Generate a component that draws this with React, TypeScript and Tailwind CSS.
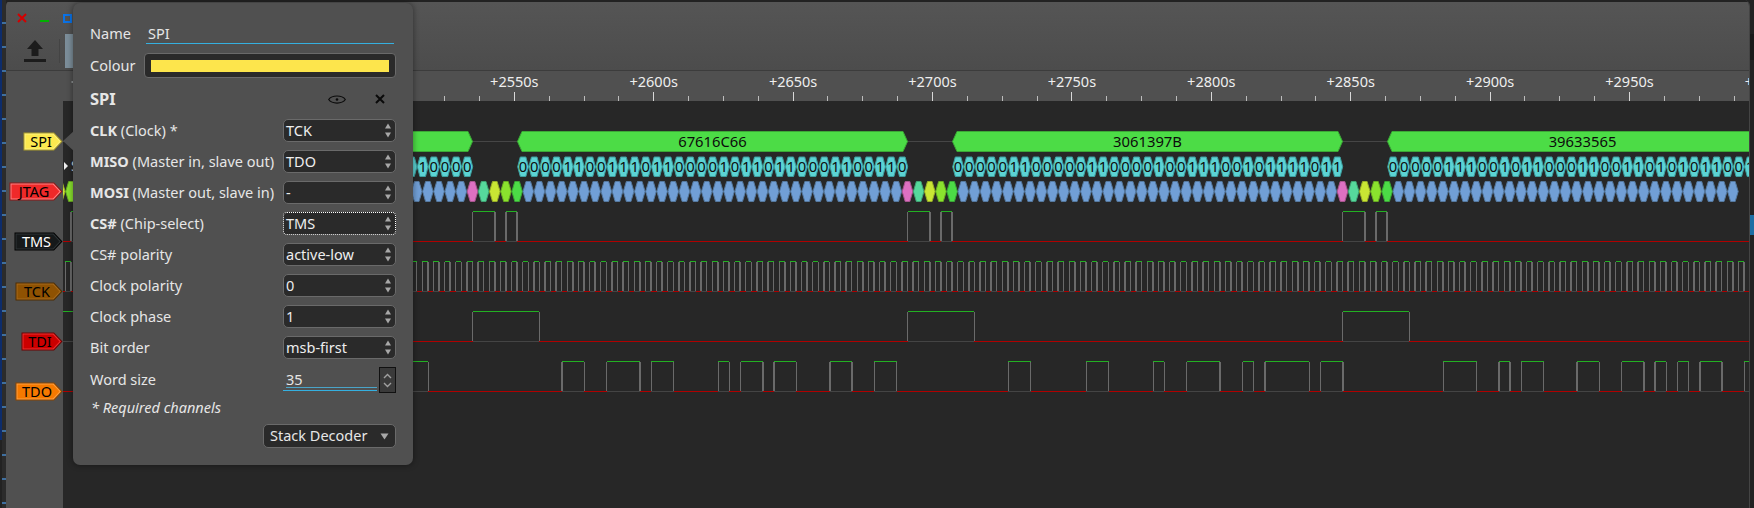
const BIT = 435 / 39;

const words = [
  { start: 82.5, hex: "", bits: "00000000000000000000000000000110000" },
  { start: 517.5, hex: "67616C66", bits: "" },
  { start: 952.5, hex: "3061397B", bits: "" },
  { start: 1387.5, hex: "39633565", bits: "" },
].map((w) => ({
  ...w,
  bits: w.bits || parseInt(w.hex, 16).toString(2).padStart(35, "0"),
}));

// labels left of +2550s sit under the popup
const rulerMarks = [2550, 2600, 2650, 2700, 2750, 2800, 2850, 2900, 2950, 3000];
const RULER_ZERO = 514.3;
const RULER_STEP = 139.4;

const traceRows = [
  { name: "SPI", width: 40, fill: "#fce94f", edge: "#a89a2a", inner: "#fff27f", text: "#000000" },
  { name: "JTAG", width: 54, fill: "#ef2929", edge: "#8f1515", inner: "#ff8585", text: "#000000" },
  { name: "TMS", width: 49, fill: "#16191a", edge: "#000000", inner: "#2e3436", text: "#ffffff" },
  { name: "TCK", width: 48, fill: "#8f5202", edge: "#4f2d01", inner: "#a76a1c", text: "#000000" },
  { name: "TDI", width: 42, fill: "#cc0000", edge: "#6e0000", inner: "#ee3030", text: "#000000" },
  { name: "TDO", width: 48, fill: "#f57900", edge: "#8a4400", inner: "#ffa040", text: "#000000" },
];

const channelFields = [
  { bold: "CLK", rest: " (Clock) *", value: "TCK" },
  { bold: "MISO", rest: " (Master in, slave out)", value: "TDO" },
  { bold: "MOSI", rest: " (Master out, slave in)", value: "-" },
  { bold: "CS#", rest: " (Chip-select)", value: "TMS", focus: true },
  { bold: "", rest: "CS# polarity", value: "active-low" },
  { bold: "", rest: "Clock polarity", value: "0" },
  { bold: "", rest: "Clock phase", value: "1" },
  { bold: "", rest: "Bit order", value: "msb-first" },
];

type Span = [number, number];

const wordStarts = [37.5, 472.5, 907.5, 1342.5];

const tmsHigh: Span[] = wordStarts.flatMap((s): Span[] => [
  [s, s + 2 * BIT],
  [s + 3 * BIT, s + 4 * BIT],
]);
const tdiHigh: Span[] = wordStarts.map((s): Span => [s, s + 6 * BIT]);
const tckHigh: Span[] = Array.from({ length: 160 }, (_, n): Span => {
  const rise = 37.5 - BIT / 2 + n * BIT;
  return [rise, rise + BIT / 2];
});
const tdoHigh: Span[] = words.flatMap((w) => {
  const out: Span[] = [];
  w.bits.split("").forEach((b, i) => {
    if (b !== "1") return;
    const x = w.start + i * BIT;
    const last = out[out.length - 1];
    if (last && Math.abs(last[1] - x) < 1) last[1] = x + BIT;
    else out.push([x, x + BIT]);
  });
  return out;
});

const LEFT = 63;
const RIGHT = 1749;

function Signal({ low, high }: { low: number; high: Span[] }) {
  const top = low - 30;
  const spans = high.filter(([a, b]) => b > LEFT && a < RIGHT);
  const reds: Span[] = [];
  let cursor = LEFT;
  spans.forEach(([a, b]) => {
    if (a > cursor) reds.push([cursor, a]);
    cursor = b;
  });
  if (cursor < RIGHT) reds.push([cursor, RIGHT]);
  return (
    <g shapeRendering="crispEdges">
      <line x1={LEFT} x2={RIGHT} y1={low + 0.5} y2={low + 0.5} stroke="#444444" />
      {reds.map(([a, b], i) => (
        <line key={i} x1={a} x2={b} y1={low + 0.5} y2={low + 0.5} stroke="#b00000" />
      ))}
      {spans.map(([a, b], i) => (
        <g key={i}>
          <line x1={Math.max(a, LEFT)} x2={Math.min(b, RIGHT)} y1={top + 0.5} y2={top + 0.5} stroke="#22b022" />
          {a > LEFT && <line x1={a} x2={a} y1={top + 1} y2={low} stroke="#6a6a6a" strokeWidth={1.4} />}
          {b < RIGHT && <line x1={b} x2={b} y1={top + 1} y2={low} stroke="#6a6a6a" strokeWidth={1.4} />}
        </g>
      ))}
    </g>
  );
}

function hexPoints(a: number, b: number, top: number, bottom: number, tip: number) {
  const mid = (top + bottom) / 2;
  return `${a},${mid} ${a + tip},${top} ${b - tip},${top} ${b},${mid} ${b - tip},${bottom} ${a + tip},${bottom}`;
}

function DecoderRows() {
  return (
    <g fontFamily="'Noto Sans', sans-serif" fill="#0c0c0c" textAnchor="middle">
      <line x1={LEFT} x2={RIGHT} y1={141.5} y2={141.5} stroke="#464646" />
      {words.map((w) => (
        <g key={w.start}>
          <polygon
            points={hexPoints(w.start, w.start + 390, 131.5, 151.5, 4.5)}
            fill="#4cdc46"
            stroke="#3ba836"
          />
          {w.hex && (
            <text x={w.start + 195} y={147} fontSize={14.8}>
              {w.hex}
            </text>
          )}
          {w.bits.split("").map((b, i) => {
            const x = w.start + i * BIT;
            if (x < 400 || x > RIGHT) return null;
            return (
              <g key={i}>
                <polygon
                  points={hexPoints(x + 0.2, x + BIT - 0.2, 157, 176.5, 2.6)}
                  fill="#5cd3d3"
                  stroke="#3c9f9f"
                />
                <text x={x + BIT / 2} y={172} fontSize={14.8}>
                  {b}
                </text>
              </g>
            );
          })}
        </g>
      ))}
      {Array.from({ length: 153 }, (_, n) => {
        const center = 37.5 + n * BIT;
        const slot = n % 39;
        const fill = ["#dd70c2", "#56d89c", "#c9e634", "#8ae22e", "#4cdb46"][slot] ?? "#719fd6";
        const stroke = ["#a8558f", "#3fa375", "#97ad27", "#68aa22", "#39a635"][slot] ?? "#55799f";
        return (
          <polygon
            key={n}
            points={hexPoints(center - 5.3, center + 5.3, 181.5, 201.5, 3)}
            fill={fill}
            stroke={stroke}
          />
        );
      })}
    </g>
  );
}

function Ruler() {
  const ticks = Array.from({ length: 50 }, (_, n) => RULER_ZERO - 3 * RULER_STEP + (n * RULER_STEP) / 4);
  return (
    <svg width={1686} height={30} viewBox="63 71 1686 30" className="block">
      {ticks.map((x, n) => (
        <line
          key={n}
          x1={x}
          x2={x}
          y1={n % 4 === 0 ? 92 : 96}
          y2={101}
          stroke={n % 4 === 0 ? "#d8d8d8" : "#bdbdbd"}
          shapeRendering="crispEdges"
        />
      ))}
      {rulerMarks.map((m, n) => (
        <text
          key={m}
          x={RULER_ZERO + n * RULER_STEP}
          y={87}
          textAnchor="middle"
          fontFamily="'Noto Sans', sans-serif"
          fontSize={14.5}
          fill="#eeeeee"
        >
          +{m}s
        </text>
      ))}
      <rect x={71.5} y={81.5} width={2} height={1} fill="#cfd8dc" />
    </svg>
  );
}

function TraceLabel({ name, width, fill, edge, inner, text }: (typeof traceRows)[number]) {
  const h = 18;
  const body = width - 9;
  return (
    <svg width={width} height={h + 1} className="block">
      <polygon points={`0.5,0.5 ${body},0.5 ${width - 0.5},${h / 2 + 0.5} ${body},${h + 0.5} 0.5,${h + 0.5}`} fill={edge} />
      <polygon points={`1.5,1.5 ${body - 0.5},1.5 ${width - 2},${h / 2 + 0.5} ${body - 0.5},${h - 0.5} 1.5,${h - 0.5}`} fill={inner} />
      <polygon points={`2.5,2.5 ${body - 1},2.5 ${width - 3.5},${h / 2 + 0.5} ${body - 1},${h - 1.5} 2.5,${h - 1.5}`} fill={fill} />
      <text
        x={(body + 5) / 2}
        y={14.5}
        textAnchor="middle"
        fontFamily="'Noto Sans', sans-serif"
        fontSize={14.5}
        fill={text}
      >
        {name}
      </text>
    </svg>
  );
}

function SpinArrows() {
  return (
    <svg width={6} height={15} viewBox="0 0 6 15" className="shrink-0">
      <polygon points="3,0.5 6,5.5 0,5.5" fill="#a8a8a8" />
      <polygon points="0,9.5 6,9.5 3,14.5" fill="#a8a8a8" />
    </svg>
  );
}

function SelectBox({ value, focus }: { value: string; focus?: boolean }) {
  return (
    <div
      className={
        focus
          ? "flex h-[23px] w-[113px] items-center justify-between rounded-[4px] border border-dotted border-white bg-[#2a2a2a] pl-[2px] pr-[4px]"
          : "flex h-[23px] w-[113px] items-center justify-between rounded-[5px] border border-[#6a6a6a] bg-[#2a2a2a] pl-[2px] pr-[4px]"
      }
    >
      <span className="pb-[2px] text-[#eeeeee]">{value}</span>
      <SpinArrows />
    </div>
  );
}

function DecoderPopup() {
  return (
    <div className="absolute left-[73px] top-[3px] h-[462px] w-[340px] rounded-[7px] bg-[#505050] pl-[17px] pr-[17px] pt-[19px] text-[14.5px] leading-[20px] text-[#e6e6e6] shadow-[0_0_6px_rgba(0,0,0,0.45)] font-['Noto_Sans',sans-serif]">
      <svg width={13} height={24} viewBox="0 0 13 24" className="absolute left-[-10px] top-[126px]">
        <polygon points="0,12 13,0 13,24" fill="#505050" />
      </svg>

      <div className="flex h-[22px] items-center">
        <span className="w-[56px] pb-[1px]">Name</span>
        <div className="mr-[2px] flex h-[22px] flex-1 items-center border-b border-[#35b0e0] pl-[2px]">SPI</div>
      </div>

      <div className="mt-[9px] flex h-[25px] items-center">
        <span className="w-[54px] pb-[2px]">Colour</span>
        <div className="flex h-[25px] flex-1 items-center rounded-[4px] border border-[#6a6a6a] bg-[#2a2a2a] px-[6px]">
          <div className="h-[12px] w-full bg-[#fde54c]" />
        </div>
      </div>

      <div className="mt-[10px] flex h-[22px] items-center justify-between">
        <span className="text-[16.5px] font-bold">SPI</span>
        <div className="flex items-center gap-[29px] pr-[11px]">
          <svg width={18} height={11} viewBox="0 0 18 11" fill="none">
            <path d="M0.7 5.5 C4 0.8 14 0.8 17.3 5.5 C14 10.2 4 10.2 0.7 5.5 Z" stroke="#0a0a0a" strokeWidth={1.2} />
            <circle cx={9} cy={5.5} r={1.3} fill="#0a0a0a" />
          </svg>
          <svg width={10} height={10} viewBox="0 0 10 10">
            <path d="M1 1 L9 9 M9 1 L1 9" stroke="#0a0a0a" strokeWidth={2} />
          </svg>
        </div>
      </div>

      <div className="mt-[9px] flex flex-col gap-[8px]">
        {channelFields.map((f) => (
          <div key={f.value + f.rest} className="flex h-[23px] items-center justify-between">
            <span className="pb-[2px]">
              {f.bold && <b>{f.bold}</b>}
              {f.rest}
            </span>
            <SelectBox value={f.value} focus={f.focus} />
          </div>
        ))}
      </div>

      <div className="mt-[8px] flex h-[26px] items-center">
        <span className="w-[194px] pb-[2px]">Word size</span>
        <div className="relative flex h-[21px] w-[94px] items-start border-b border-[#35b0e0] pl-[3px]">
          <span className="h-[18px] w-[91px] border-b border-[#4aa4c8] leading-[18px]">35</span>
        </div>
        <div className="ml-[2px] flex h-[26px] w-[17px] flex-col items-center justify-center gap-[3px] border border-[#111111] bg-[#3a3a3a]">
          <svg width={9} height={6} viewBox="0 0 9 6" fill="none">
            <path d="M1 5 L4.5 1.5 L8 5" stroke="#a0a0a0" strokeWidth={1.4} />
          </svg>
          <svg width={9} height={6} viewBox="0 0 9 6" fill="none">
            <path d="M1 1 L4.5 4.5 L8 1" stroke="#a0a0a0" strokeWidth={1.4} />
          </svg>
        </div>
      </div>

      <div className="mt-[5px] h-[18px] pl-[1px] text-[14.5px] italic leading-[18px]">* Required channels</div>

      <div className="mt-[8px] flex justify-end">
        <div className="flex h-[24px] w-[133px] items-center justify-between rounded-[5px] border border-[#6a6a6a] bg-[#2a2a2a] pl-[6px] pr-[6px]">
          <span className="pb-[2px]">Stack Decoder</span>
          <svg width={9} height={7} viewBox="0 0 9 7">
            <polygon points="0.5,0.5 8.5,0.5 4.5,6.5" fill="#a8a8a8" />
          </svg>
        </div>
      </div>
    </div>
  );
}

function Toolbar() {
  return (
    <div className="flex h-[69px] shrink-0 flex-col border-b border-[#3c3c3c] bg-gradient-to-b from-[#555555] to-[#4c4c4c]">
      <div className="flex h-[30px] items-center pl-[11px] pt-[2px]">
        <svg width={10} height={10} viewBox="0 0 10 10">
          <path d="M1 1 L9 9 M9 1 L1 9" stroke="#d40000" strokeWidth={2} />
        </svg>
        <div className="ml-[13px] mt-[6px] h-[2px] w-[9px] bg-[#00b000]" />
        <div className="ml-[14px] h-[9px] w-[9px] border-2 border-[#0a72e6]" />
      </div>
      <div className="flex flex-1 items-center pl-[2px]">
        <div className="h-[36px] w-[8px] bg-[radial-gradient(#8a8a8a_0.6px,transparent_0.7px)] bg-[length:2px_2px]" />
        <svg width={24} height={24} viewBox="0 0 24 24" className="ml-[7px]">
          <polygon points="12,1 20,10 15.5,10 15.5,17 8.5,17 8.5,10 4,10" fill="#1c1c1c" />
          <rect x={1} y={20} width={22} height={3} fill="#1c1c1c" />
        </svg>
        <div className="ml-[12px] h-[24px] w-px bg-[#444444]" />
        <div className="ml-[5px] h-[34px] w-[20px] bg-[#7c8e9a]" />
      </div>
    </div>
  );
}

export default function App() {
  return (
    <div className="relative flex h-[508px] w-[1754px] overflow-hidden bg-[#222222]">
      {/* desktop peeking out on the left */}
      <div className="flex w-[6px] shrink-0">
        <div className="h-[440px] w-[2px] bg-[#0d2c6b]" />
        <div className="h-full w-[4px] bg-[#2b2b2b] bg-[repeating-linear-gradient(to_bottom,transparent_0_22px,#3f6f9f_22px_24px)]" />
      </div>

      <div className="flex w-[1744px] shrink-0 flex-col overflow-hidden rounded-t-[6px] border-r border-[#444444]">
        <div className="h-[2px] shrink-0 bg-[#222222]" />
        <Toolbar />
        <div className="flex flex-1">
          <div className="w-[57px] shrink-0 bg-[#505050] pt-[45px]">
            {traceRows.map((row) => (
              <div key={row.name} className="flex h-[50px] items-center justify-end">
                <TraceLabel {...row} />
              </div>
            ))}
          </div>
          <div className="flex flex-1 flex-col">
            <div className="h-[30px] bg-[#505050]">
              <Ruler />
            </div>
            <div className="relative flex-1 bg-[#272727]">
              <svg width={1686} height={407} viewBox="63 101 1686 407" className="block">
                <DecoderRows />
                <Signal low={241} high={tmsHigh} />
                <Signal low={291} high={tckHigh} />
                <Signal low={341} high={tdiHigh} />
                <Signal low={391} high={tdoHigh} />
                <polygon points="64,162 68,166 64,170" fill="#eeeeee" />
                <text x={71} y={171} fontFamily="'Noto Sans', sans-serif" fontSize={14} fill="#dddddd">
                  S
                </text>
              </svg>
            </div>
          </div>
        </div>
      </div>

      {/* other windows behind, right edge */}
      <div className="flex w-[4px] shrink-0 flex-col">
        <div className="mt-[34px] h-[26px] bg-[#1a1a1a]" />
        <div className="mt-[155px] h-[20px] bg-[#1c6ea4]" />
      </div>

      <DecoderPopup />
    </div>
  );
}
